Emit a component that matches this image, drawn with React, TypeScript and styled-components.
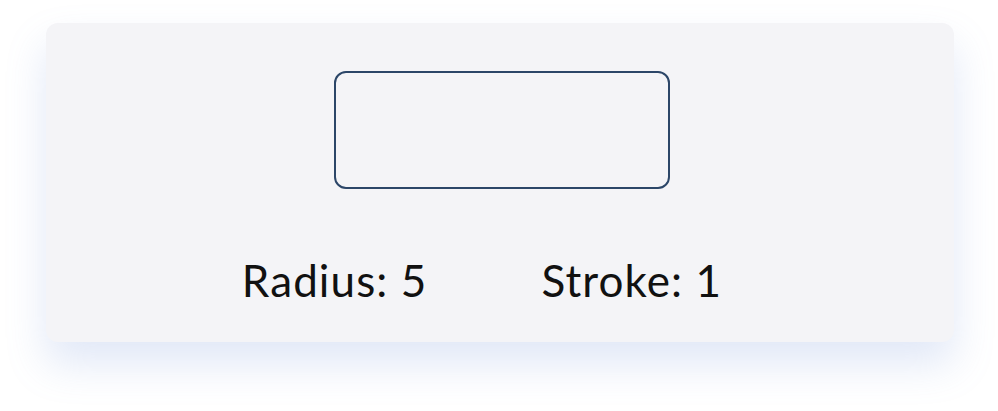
import React from "react";
import styled, { createGlobalStyle } from "styled-components";

const GlobalStyle = createGlobalStyle`
  html, body {
    margin: 0;
    padding: 0;
    background: #ffffff;
  }
  body {
    font-family: "Lato", "Noto Sans", sans-serif;
  }
`;

const Page = styled.div`
  width: 998px;
  height: 411px;
  box-sizing: border-box;
  padding: 23px 44px 0 46px;
  overflow: hidden;
`;

const Card = styled.div`
  width: 908px;
  height: 319px;
  box-sizing: border-box;
  background: #f4f4f7;
  border-radius: 12px;
  box-shadow: 0 22px 40px rgba(120, 150, 220, 0.22);
  display: flex;
  flex-direction: column;
  align-items: center;
  padding-top: 48px;
`;

const Preview = styled.div<{ $radius: number; $stroke: number }>`
  width: 336px;
  height: 118px;
  box-sizing: border-box;
  margin-left: 4px;
  border: ${(p) => p.$stroke * 2.3}px solid #2c4668;
  border-radius: ${(p) => p.$radius * 2 + 2}px;
`;

const Labels = styled.div`
  display: flex;
  gap: 114px;
  margin-top: 67px;
  margin-right: 36px;
`;

const Label = styled.span`
  font-size: 44px;
  line-height: 48px;
  letter-spacing: 1.1px;
  color: #111111;
  font-weight: 400;
`;

export default function App() {
  const radius = 5;
  const stroke = 1;
  return (
    <>
      <GlobalStyle />
      <Page>
        <Card>
          <Preview $radius={radius} $stroke={stroke} />
          <Labels>
            <Label>Radius: {radius}</Label>
            <Label>Stroke: {stroke}</Label>
          </Labels>
        </Card>
      </Page>
    </>
  );
}
